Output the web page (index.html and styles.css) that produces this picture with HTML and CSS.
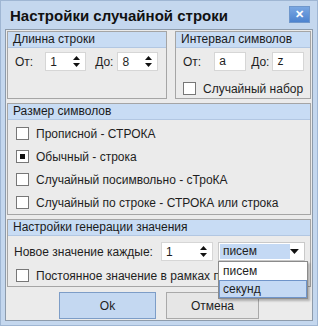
FILE: index.html
```html
<!DOCTYPE html>
<html lang="ru">

<head>
    <meta charset="UTF-8">
    <title>Настройки случайной строки</title>
    <link rel="stylesheet" href="styles.css">
</head>

<body>
    <div class="window">
        <div class="titlebar">
            <span class="title">Настройки случайной строки</span>
            <span class="close">&#x2715;</span>
        </div>
        <div class="client">
            <div class="top-row">
                <div class="group g-len">
                    <div class="group-head">Длинна строки</div>
                    <div class="line">
                        <span class="lbl">От:</span>
                        <div class="spin s-from"><span>1</span>
                            <svg class="arrows" width="7" height="11" viewBox="0 0 7 11"><path d="M3.5 0L7 4H0z M3.5 11L7 7H0z" fill="#111"/></svg>
                        </div>
                        <span class="lbl lbl-to">До:</span>
                        <div class="spin s-to"><span>8</span>
                            <svg class="arrows" width="7" height="11" viewBox="0 0 7 11"><path d="M3.5 0L7 4H0z M3.5 11L7 7H0z" fill="#111"/></svg>
                        </div>
                    </div>
                </div>
                <div class="group g-range">
                    <div class="group-head">Интервал символов</div>
                    <div class="line">
                        <span class="lbl">От:</span>
                        <div class="edit e-from">a</div>
                        <span class="lbl lbl-to">До:</span>
                        <div class="edit e-to">z</div>
                    </div>
                    <div class="check-row">
                        <span class="box"></span>Случайный набор
                    </div>
                </div>
            </div>

            <div class="group g-size">
                <div class="group-head">Размер символов</div>
                <div class="check-row"><span class="box"></span>Прописной - СТРОКА</div>
                <div class="check-row"><span class="box checked"></span>Обычный - строка</div>
                <div class="check-row"><span class="box"></span>Случайный посимвольно - сТроКА</div>
                <div class="check-row"><span class="box"></span>Случайный по строке - СТРОКА или строка</div>
            </div>

            <div class="group g-gen">
                <div class="group-head">Настройки генерации значения</div>
                <div class="line">
                    <span class="lbl">Новое значение каждые:</span>
                    <div class="spin s-every"><span>1</span>
                        <svg class="arrows" width="7" height="11" viewBox="0 0 7 11"><path d="M3.5 0L7 4H0z M3.5 11L7 7H0z" fill="#111"/></svg>
                    </div>
                    <div class="combo">
                        <span class="combo-text">писем</span>
                        <svg class="combo-arrow" width="9" height="5" viewBox="0 0 9 5"><path d="M0 0H9L4.5 5z" fill="#111"/></svg>
                    </div>
                </div>
                <div class="check-row"><span class="box"></span>Постоянное значение в рамках письма</div>
                <!-- открытый список комбобокса -->
                <div class="dropdown">
                    <div class="item">писем</div>
                    <div class="item selected">секунд</div>
                </div>
            </div>

            <div class="buttons">
                <button class="btn btn-ok">Ok</button>
                <button class="btn">Отмена</button>
            </div>
        </div>
    </div>
</body>

</html>
```

FILE: styles.css
```css
body {
    margin: 0;
    font-family: "Liberation Sans", Arial, sans-serif;
    font-size: 12px;
    color: #1e1e1e;
}

.window {
    box-sizing: border-box;
    width: 318px;
    height: 326px;
    display: flex;
    flex-direction: column;
    background: #c4d7ee;
    border: 1px solid #9fb6d3;
    padding: 0 4px 4px;
}

.titlebar {
    height: 28px;
    display: flex;
    align-items: center;
    justify-content: space-between;
    padding: 0 3px 0 5px;
}

.title {
    font-size: 15px;
    font-weight: bold;
    color: #111;
}

.close {
    width: 19px;
    height: 15px;
    margin-top: -2px;
    background: linear-gradient(#7aa7e2, #4d83cf);
    border: 1px solid #6f97cc;
    color: #fff;
    font-size: 11px;
    font-weight: bold;
    line-height: 15px;
    text-align: center;
}

.client {
    flex: 1;
    display: flex;
    flex-direction: column;
    gap: 4px;
    background: #ebebeb;
    border: 1px solid #8d9bab;
    padding: 1px 1px 0;
}

.top-row {
    display: flex;
    gap: 8px;
}

.group {
    position: relative;
    box-sizing: border-box;
    border: 1px solid #a5a5a5;
    background: #ebebeb;
}

.group-head {
    height: 15px;
    line-height: 15px;
    padding-left: 5px;
    background: #c8dcf4;
    border-bottom: 1px solid #b2c7e2;
    color: #1a1a1a;
}

.g-len {
    width: 160px;
    height: 68px;
}

.g-range {
    flex: 1;
    height: 68px;
}

.g-size {
    height: 112px;
}

.g-gen {
    height: 68px;
}

.line {
    display: flex;
    align-items: center;
    height: 19px;
    margin-top: 4px;
    padding-left: 7px;
}

.lbl {
    margin-right: 12px;
}

.lbl-to {
    margin-left: 9px;
    margin-right: 4px;
}

.spin,
.edit {
    box-sizing: border-box;
    height: 19px;
    background: #fff;
    border: 1px solid #d6d6d6;
    display: flex;
    align-items: center;
    padding-left: 4px;
}

.spin {
    justify-content: space-between;
    padding-right: 5px;
}

.s-from,
.s-to {
    width: 41px;
}

.s-every {
    width: 52px;
}

.edit {
    width: 32px;
    align-items: flex-start;
    padding-top: 1px;
}

.g-range .lbl {
    margin-right: 13px;
}

.g-range .lbl-to {
    margin-left: 5px;
    margin-right: 3px;
}

.check-row {
    display: flex;
    align-items: center;
    height: 23px;
    padding-left: 8px;
    white-space: nowrap;
}

.g-range .check-row {
    margin-top: 6px;
    padding-left: 7px;
}

.g-size .group-head {
    margin-bottom: 2px;
}

.box {
    box-sizing: border-box;
    flex: none;
    width: 13px;
    height: 13px;
    margin-right: 7px;
    background: #fff;
    border: 1px solid #777;
    display: flex;
    align-items: center;
    justify-content: center;
}

.box.checked::after {
    content: "";
    width: 5px;
    height: 5px;
    background: #111;
}

.g-gen .line {
    margin-top: 6px;
    padding-left: 6px;
}

.g-gen .lbl {
    margin-right: 8px;
}

.g-gen .check-row {
    margin-top: 3px;
}

.combo {
    box-sizing: border-box;
    width: 87px;
    height: 19px;
    margin-left: 5px;
    display: flex;
    align-items: center;
    justify-content: space-between;
    background: #fff;
    border: 1px solid #c9c9c9;
    padding: 1px 5px 1px 1px;
}

.combo-text {
    width: 68px;
    height: 15px;
    line-height: 15px;
    padding-left: 3px;
    background: #c4d9f4;
}

.dropdown {
    position: absolute;
    left: 210px;
    top: 41px;
    width: 88px;
    background: #fff;
    border: 1px solid #8b8b8b;
    box-shadow: 2px 2px 2px rgba(0, 0, 0, 0.25);
    z-index: 2;
}

.item {
    box-sizing: border-box;
    height: 18px;
    line-height: 16px;
    padding-left: 3px;
    border: 1px solid transparent;
}

.item.selected {
    background: #c4d9f4;
    border-color: #6f94c9;
}

.buttons {
    display: flex;
    justify-content: center;
    gap: 10px;
    margin-top: 1px;
}

.btn {
    width: 93px;
    height: 27px;
    font-family: inherit;
    font-size: 12px;
    color: #1e1e1e;
    background: #e6e6e6;
    border: 1px solid #a9a9a9;
}

.btn-ok {
    width: 97px;
    background: #c4d8f1;
    border-color: #7d9dc7;
}
```
